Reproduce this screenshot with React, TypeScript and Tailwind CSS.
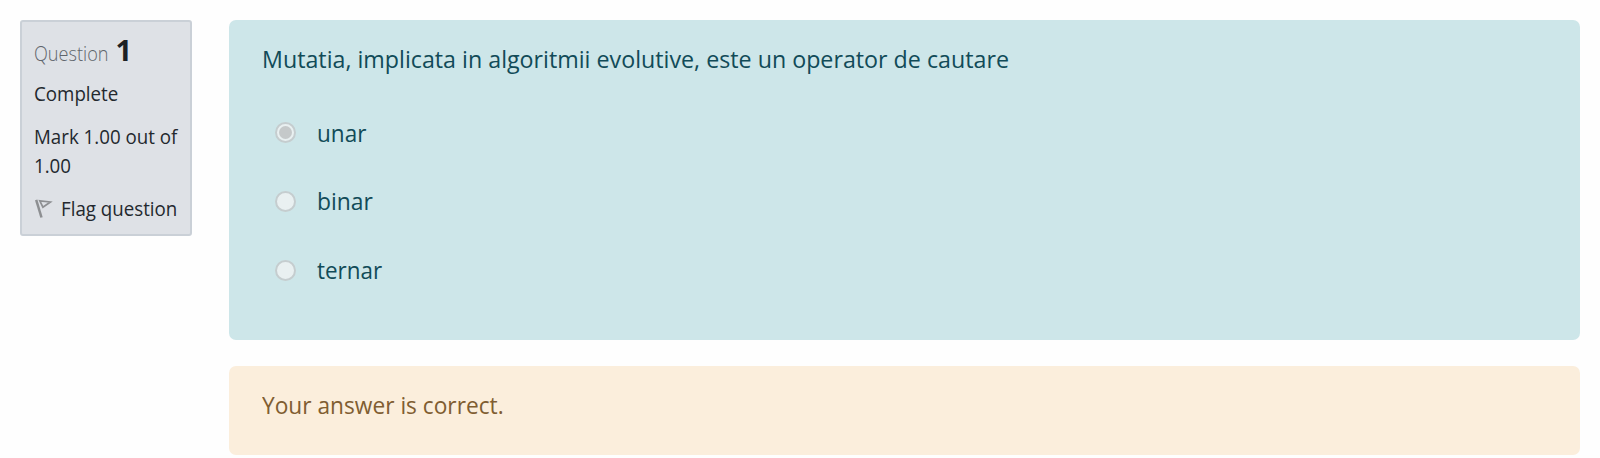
const options = [
  { label: "unar", checked: true, style: "scale-x-[0.92]" },
  { label: "binar", checked: false, style: "scale-x-[0.935]" },
  { label: "ternar", checked: false, style: "scale-x-[0.915]" },
];

function Radio({ checked }: { checked: boolean }) {
  return (
    <span
      role="radio"
      aria-checked={checked}
      className="flex size-[21px] shrink-0 items-center justify-center rounded-full border-2 border-[#c5cdcf] bg-[#e9f0f1]"
    >
      {checked && <span className="size-[13px] rounded-full bg-[#c5c9ca]" />}
    </span>
  );
}

function FlagIcon() {
  return (
    <svg width="18" height="20" viewBox="0 0 18 20" fill="none" stroke="#8d8f92" aria-hidden="true">
      <path d="M1.2 0.8 L6.5 18.5" strokeWidth="2.5" />
      <path d="M4.8 1.8 L15.4 3 L7.9 8.2 Z" strokeWidth="1.7" />
    </svg>
  );
}

export default function App() {
  return (
    <div className="flex h-[458px] w-full items-start gap-[37px] bg-[#fefefe] pt-5 pl-5 font-['Open_Sans','Noto_Sans',sans-serif]">
      <aside className="h-[216px] w-[172px] shrink-0 rounded-[3px] border-2 border-[#cad0d7] bg-[#dee1e6] pt-[13px] pl-[12px] text-[19.5px] leading-[29px] whitespace-nowrap text-[#23282e]">
        <div className="flex h-[44px] items-baseline">
          <span className="w-[81.5px] origin-left scale-x-[0.93] font-light text-[#5f656c]">Question</span>
          <span className="text-[29px] font-bold text-[#1d2125]">1</span>
        </div>
        <div className="h-[43px] origin-left scale-x-[0.96]">Complete</div>
        <div className="h-[72px] origin-left scale-x-[0.96]">
          Mark 1.00 out of
          <br />
          1.00
        </div>
        <div className="flex">
          <span className="flex w-[26.5px] pt-[5px] pl-[1px]">
            <FlagIcon />
          </span>
          <span className="origin-left scale-x-[0.96]">Flag question</span>
        </div>
      </aside>
      <main className="flex w-[1351px] flex-col gap-[26px] text-[24.5px] leading-[38px] whitespace-nowrap">
        <section className="h-80 rounded-[7px] bg-[#cde6e9] pt-5 pl-[33px] text-[#114b58]">
          <p className="w-fit origin-left scale-x-[0.9485]">Mutatia, implicata in algoritmii evolutive, este un operator de cautare</p>
          <div className="mt-[35.5px] flex flex-col gap-[30.8px] pl-[13px]" role="radiogroup">
            {options.map((o) => (
              <label key={o.label} className="flex h-[38px] items-center gap-[21px]">
                <Radio checked={o.checked} />
                <span className={`origin-left ${o.style}`}>{o.label}</span>
              </label>
            ))}
          </div>
        </section>
        <section className="h-[89px] rounded-[7px] bg-[#fbeedc] pt-5 pl-[33px] text-[#805d31]">
          <p className="w-fit origin-left scale-x-[0.927]">Your answer is correct.</p>
        </section>
      </main>
    </div>
  );
}
